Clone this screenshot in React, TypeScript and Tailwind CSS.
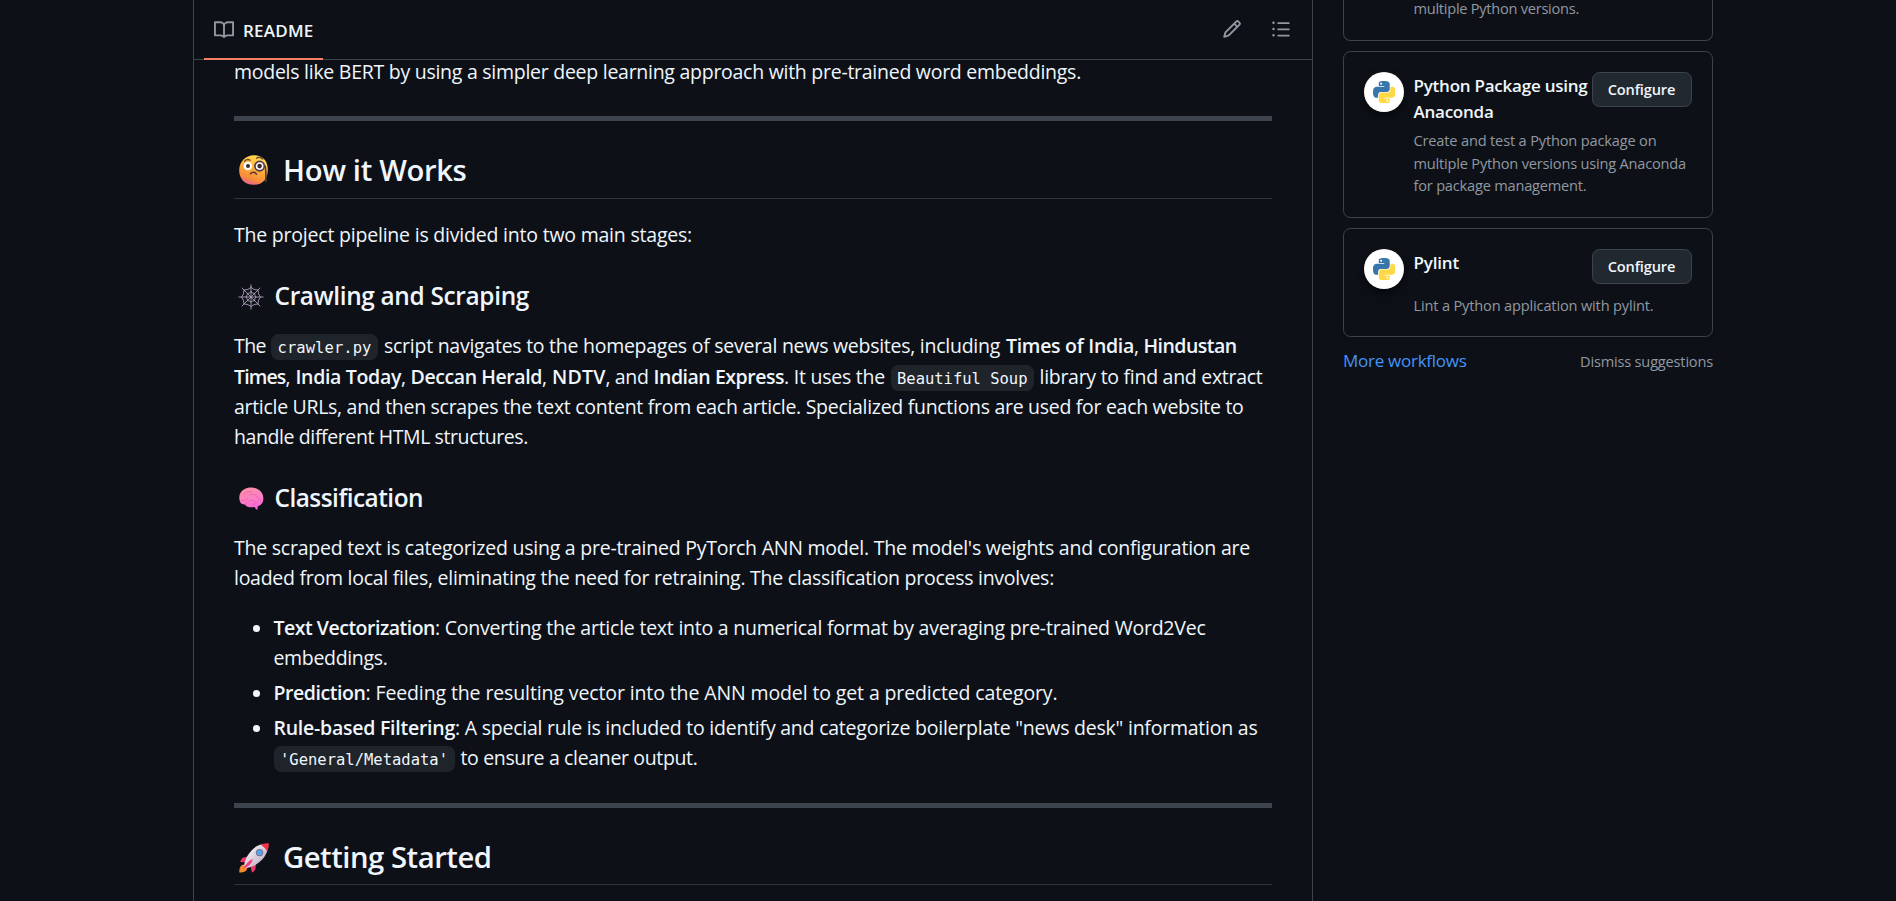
import { useLayoutEffect, useRef, useState } from "react";
import type { ReactNode } from "react";

/** A run of text whose letter spacing is adjusted so that it fills `w` pixels. */
function Fit({ w, children, className = "" }: { w: number; children: string; className?: string }) {
  const ref = useRef<HTMLSpanElement>(null);
  const [spacing, setSpacing] = useState(0);
  useLayoutEffect(() => {
    const el = ref.current;
    if (!el) return;
    el.style.letterSpacing = "0px";
    const value = (w - el.getBoundingClientRect().width) / children.length;
    el.style.letterSpacing = value + "px";
    setSpacing(value);
  }, [w, children]);
  return (
    <span ref={ref} className={"inline-block shrink-0 whitespace-pre " + className} style={{ letterSpacing: spacing }}>
      {children}
    </span>
  );
}

function Bold({ w, children, className = "" }: { w: number; children: string; className?: string }) {
  return (
    <strong className={"block shrink-0 font-semibold " + className}>
      <Fit w={w}>{children}</Fit>
    </strong>
  );
}

function Line({ children, className = "" }: { children: ReactNode; className?: string }) {
  return <div className={"flex h-[30px] leading-[30px] " + className}>{children}</div>;
}

function Code({ w, children, className = "" }: { w: number; children: string; className?: string }) {
  return (
    <code
      className={
        "mt-[3px] flex h-[26.5px] shrink-0 items-center rounded-[7.5px] bg-[#1f242b] px-[6.5px] pt-[1.5px] font-['DejaVu_Sans_Mono',monospace] text-[15.5px] leading-[26px] " +
        className
      }
    >
      <Fit w={w}>{children}</Fit>
    </code>
  );
}

function BookIcon() {
  return (
    <svg viewBox="0 0 16 16" className="mt-5 h-5 w-5 shrink-0 fill-[#9198a1]">
      <path d="M0 1.75A.75.75 0 0 1 .75 1h4.253c1.227 0 2.317.59 3 1.501A3.743 3.743 0 0 1 11.006 1h4.245a.75.75 0 0 1 .75.75v10.5a.75.75 0 0 1-.75.75h-4.507a2.25 2.25 0 0 0-1.591.659l-.622.621a.75.75 0 0 1-1.06 0l-.622-.621A2.25 2.25 0 0 0 5.258 13H.75a.75.75 0 0 1-.75-.75Zm7.251 10.324.004-5.073-.002-2.253A2.25 2.25 0 0 0 5.003 2.5H1.5v9h3.757a3.75 3.75 0 0 1 1.994.574ZM8.755 4.75l-.004 7.322a3.752 3.752 0 0 1 1.992-.572H14.5v-9h-3.495a2.25 2.25 0 0 0-2.25 2.25Z" />
    </svg>
  );
}

function PencilIcon() {
  return (
    <svg viewBox="0 0 16 16" className="h-5 w-5 fill-[#9198a1]">
      <path d="M11.013 1.427a1.75 1.75 0 0 1 2.474 0l1.086 1.086a1.75 1.75 0 0 1 0 2.474l-8.61 8.61c-.21.21-.47.364-.756.445l-3.251.93a.75.75 0 0 1-.927-.928l.929-3.25c.081-.286.235-.547.445-.758l8.61-8.61Zm.176 4.823L9.75 4.81l-6.286 6.287a.253.253 0 0 0-.064.108l-.558 1.953 1.953-.558a.253.253 0 0 0 .108-.064Zm1.238-3.763a.25.25 0 0 0-.354 0L10.811 3.75l1.439 1.44 1.263-1.263a.25.25 0 0 0 0-.354Z" />
    </svg>
  );
}

function ListIcon() {
  return (
    <svg viewBox="0 0 16 16" className="h-5 w-5 fill-[#9198a1]">
      <path d="M5.75 2.5h8.5a.75.75 0 0 1 0 1.5h-8.5a.75.75 0 0 1 0-1.5Zm0 5h8.5a.75.75 0 0 1 0 1.5h-8.5a.75.75 0 0 1 0-1.5Zm0 5h8.5a.75.75 0 0 1 0 1.5h-8.5a.75.75 0 0 1 0-1.5ZM2 14a1 1 0 1 1 0-2 1 1 0 0 1 0 2Zm1-6a1 1 0 1 1-2 0 1 1 0 0 1 2 0ZM2 4a1 1 0 1 1 0-2 1 1 0 0 1 0 2Z" />
    </svg>
  );
}

function PythonAvatar() {
  return (
    <div className="flex h-10 w-10 shrink-0 items-center justify-center rounded-full bg-white shadow-[0_4px_8px_rgba(1,4,9,0.7)]">
      <svg viewBox="0 0 24 24" className="h-[22.5px] w-[22.5px]">
        <path
          fill="#3776ab"
          d="M14.25.18l.9.2.73.26.59.3.45.32.34.34.25.34.16.33.1.3.04.26.02.2-.01.13V8.5l-.05.63-.13.55-.21.46-.26.38-.3.31-.33.25-.35.19-.35.14-.33.1-.3.07-.26.04-.21.02H8.77l-.69.05-.59.14-.5.22-.41.27-.33.32-.27.35-.2.36-.15.37-.1.35-.07.32-.04.27-.02.21v3.06H3.17l-.21-.03-.28-.07-.32-.12-.35-.18-.36-.26-.36-.36-.35-.46-.32-.59-.28-.73-.21-.88-.14-1.05-.05-1.23.06-1.22.16-1.04.24-.87.32-.71.36-.57.4-.44.42-.33.42-.24.4-.16.36-.1.32-.05.24-.01h.16l.06.01h8.16v-.83H6.18l-.01-2.75-.02-.37.05-.34.11-.31.17-.28.25-.26.31-.23.38-.2.44-.18.51-.15.58-.12.64-.1.71-.06.77-.04.84-.02 1.27.05zm-6.3 1.98l-.23.33-.08.41.08.41.23.34.33.22.41.09.41-.09.33-.22.23-.34.08-.41-.08-.41-.23-.33-.33-.22-.41-.09-.41.09z"
        />
        <path
          fill="#ffd845"
          d="M21.04 6.11l.28.06.32.12.35.18.36.27.36.35.35.47.32.59.28.73.21.88.14 1.04.05 1.23-.06 1.23-.16 1.04-.24.86-.32.71-.36.57-.4.45-.42.33-.42.24-.4.16-.36.09-.32.05-.24.02-.16-.01h-8.22v.82h5.84l.01 2.76.02.36-.05.34-.11.31-.17.29-.25.25-.31.24-.38.2-.44.17-.51.15-.58.13-.64.09-.71.07-.77.04-.84.01-1.27-.04-1.07-.14-.9-.2-.73-.25-.59-.3-.45-.33-.34-.34-.25-.34-.16-.33-.1-.3-.04-.25-.02-.2.01-.13v-5.34l.05-.64.13-.54.21-.46.26-.38.3-.32.33-.24.35-.2.35-.14.33-.1.3-.06.26-.04.21-.02.13-.01h5.84l.69-.05.59-.14.5-.21.41-.28.33-.32.27-.35.2-.36.15-.36.1-.35.07-.32.04-.28.02-.21V6.07h2.09l.14.01zm-6.47 14.25l-.23.33-.08.41.08.41.23.33.33.23.41.08.41-.08.33-.23.23-.33.08-.41-.08-.41-.23-.33-.33-.23-.41-.08-.41.08z"
        />
      </svg>
    </div>
  );
}

function MonocleFace() {
  return (
    <svg viewBox="0 0 30 30" className="ml-[5px] mt-[3.5px] h-[30px] w-[30px] shrink-0">
      <defs>
        <linearGradient id="face" x1="0.7" y1="0" x2="0.35" y2="1">
          <stop offset="0" stopColor="#ffe152" />
          <stop offset="0.45" stopColor="#fdb038" />
          <stop offset="0.8" stopColor="#f88b3c" />
          <stop offset="1" stopColor="#e2638f" />
        </linearGradient>
      </defs>
      <path d="M15 .2C23.500 .2 29 6 28.800 14.500 28.800 24 24 29.800 14.500 29.800 5.500 29.800 .2 23.500 .2 15.500 .2 6.500 6.500 .2 15 .2Z" fill="url(#face)" />
      <path d="M5.600 6.200c1.500-1.700 3.800-2 5.600-1M17.500 3.300c1.800-1.500 4.200-1.300 6.200.7" stroke="#714b30" strokeWidth="1.300" fill="none" strokeLinecap="round" />
      <circle cx="8.800" cy="11" r="4.300" fill="#fff" />
      <circle cx="9" cy="11.100" r="2" fill="#402a32" />
      <circle cx="20.600" cy="11.100" r="4.700" fill="#fff" stroke="#533b4d" strokeWidth="1.700" />
      <circle cx="20.600" cy="11.100" r="2.300" fill="#402a32" />
      <path d="M11.500 18.700c1.800-2 4.600-1.800 6 .4" stroke="#5c2f37" strokeWidth="1.500" fill="none" strokeLinecap="round" />
      <path d="M26 11c1.200 4 1 10 .8 15.500" stroke="#533b4d" strokeWidth="1.600" fill="none" strokeLinecap="round" />
    </svg>
  );
}

function WebIcon() {
  return (
    <svg viewBox="0 0 26 26" className="ml-[4px] mt-1 h-[26px] w-[26px] shrink-0" fill="none" stroke="#b4a5bf" strokeLinecap="round" strokeWidth="0.850">
      <path d="M13 .8v24.400M.8 13h24.400M4 4l18 18M22 4L4 22" />
      <path d="M13 3.500Q15.800 6.300 20 6Q19.800 10.200 22.500 13Q19.800 15.800 20 20Q15.800 19.800 13 22.500Q10.200 19.800 6 20Q6.200 15.800 3.500 13Q6.200 10.200 6 6Q10.200 6.300 13 3.500Z" />
      <path d="M13 8Q14.500 9.300 16.600 9.400Q16.700 11.500 18 13Q16.700 14.500 16.600 16.600Q14.500 16.700 13 18Q11.500 16.700 9.400 16.600Q9.300 14.500 8 13Q9.300 11.500 9.400 9.400Q11.500 9.300 13 8Z" />
    </svg>
  );
}

function BrainIcon() {
  return (
    <svg viewBox="0 0 25 23" className="ml-[5px] mt-[5.5px] h-[23px] w-[25px] shrink-0">
      <defs>
        <linearGradient id="brain" x1="0.3" y1="0" x2="0.6" y2="1">
          <stop offset="0" stopColor="#ff8fa6" />
          <stop offset="0.55" stopColor="#fb7fc4" />
          <stop offset="1" stopColor="#fb62da" />
        </linearGradient>
      </defs>
      <path
        d="M1 14.500C-.8 9.800.8 4.500 5.200 2.300 8.500.2 14.500-.3 18.500 2c4.300 2.300 6.300 6.500 5.800 10.500-.3 3.500-2.600 6.300-5.700 6.800.3 1.200.2 2.300-.3 3.400-.9.100-2-1.200-2.600-2.700-3.600.7-8 .6-9.700-2.600C3.400 17.500 1.500 16.500 1 14.500Z"
        fill="url(#brain)"
      />
      <path
        d="M5 7.500c2-3 5-3.500 7.500-2.500M10.500 8.500c2.500-2 6.500-1.500 7.500 1M2.500 13.500c3 .8 6-.5 6.500-2.500M6.500 17c2.500-3.500 6-4.500 9-3M18 10.500c2 .2 3.500 1.700 3.500 3.500M14.500 18c.2-1.800 1.500-3 3.500-3"
        stroke="#e04fae"
        strokeOpacity="0.6"
        strokeWidth="0.900"
        fill="none"
        strokeLinecap="round"
      />
    </svg>
  );
}

function RocketIcon() {
  return (
    <svg viewBox="0 0 30 30" className="ml-[5px] mt-[4.5px] h-[30px] w-[30px] shrink-0">
      <defs>
        <linearGradient id="hull" x1="0.2" y1="0.2" x2="0.8" y2="0.8">
          <stop offset="0" stopColor="#f4eef5" />
          <stop offset="1" stopColor="#bfb1c6" />
        </linearGradient>
      </defs>
      <path d="M4.500 21.500c-3 .5-4.300 3.500-4.200 8 4 .2 7.400-1 7.900-4Z" fill="#f58a2f" />
      <path d="M10.500 13.200 4.500 14.600C2.500 15.500 1.700 17 1.300 19l6.200.5ZM17.300 20l-1 6c-.7 1.800-1.600 3-3.300 3.500l-1.500-6Z" fill="#f0356b" />
      <path d="M5 22.700C6.500 13.500 13 3.800 22.600 1.300L28.400 7.300C26 16.500 17 23.300 7.500 25.200Z" fill="url(#hull)" />
      <path d="M21.500 1.700C24 .6 27 .1 29.800.2c.1 2.800-.4 5.800-1.600 8.200C26.800 5.300 24.500 3 21.500 1.700Z" fill="#f3314b" />
      <path d="M4 25.800C6.500 21.500 9.500 17.600 13.800 16c-.8 4.500-4.500 8-9.800 9.800Z" fill="#fa3e7c" />
      <circle cx="20.500" cy="9.600" r="3.700" fill="#7a7390" />
      <circle cx="20.500" cy="9.600" r="2.700" fill="#4fa5f5" />
    </svg>
  );
}

function Card({ className, children }: { className: string; children: ReactNode }) {
  return <div className={"flex gap-[10px] rounded-[7.5px] border border-[#3d444d] px-5 " + className}>{children}</div>;
}

function ConfigureButton() {
  return (
    <button className="flex h-[35px] w-[100px] shrink-0 items-center justify-center rounded-[7.5px] border border-[#3d444d] bg-[#212830] pb-px pr-px text-[14.6px] font-semibold">
      <Fit w={67.5}>Configure</Fit>
    </button>
  );
}

export default function App() {
  return (
    <div className="flex h-[901px] w-[1896px] overflow-hidden bg-[#0d1117] font-['Open_Sans',sans-serif] text-[19.5px] text-[#f0f6fc]">
      <main className="ml-[193px] flex h-full w-[1120px] shrink-0 flex-col border-x border-[#3d444d]">
        <header className="flex h-[60px] shrink-0 justify-between border-b border-[#3d444d] pl-[10px] pr-[21px]">
          <div className="relative flex w-[119px] pl-[10px]">
            <BookIcon />
            <span className="ml-[9px] mt-[17.5px] text-[17px] font-semibold leading-[26px]">
              <Fit w={70.5}>README</Fit>
            </span>
            <span className="absolute -bottom-px left-0 h-[2.5px] w-[119px] bg-[#f78166]" />
          </div>
          <div className="mt-[19px] flex gap-[29px]">
            <PencilIcon />
            <ListIcon />
          </div>
        </header>

        <article className="-mt-[3.5px] flex w-[1078px] flex-col pl-10">
          <Line>
            <Fit w={847}>models like BERT by using a simpler deep learning approach with pre-trained word embeddings.</Fit>
          </Line>
          <hr className="mt-[29.5px] h-[5px] shrink-0 border-0 bg-[#3d444d]" />

          <h2 className="mt-[30.5px] flex h-[47.5px] shrink-0 border-b border-[#2f353d] text-[29.25px] font-semibold leading-[37.5px]">
            <MonocleFace />
            <Fit w={183.5} className="ml-[14px]">How it Works</Fit>
          </h2>
          <Line className="mt-[20.5px]">
            <Fit w={458}>The project pipeline is divided into two main stages:</Fit>
          </Line>

          <h3 className="mt-[30px] flex h-[31.25px] shrink-0 text-[24.4px] font-semibold leading-[31.25px]">
            <WebIcon />
            <Fit w={254.5} className="ml-[10.5px]">Crawling and Scraping</Fit>
          </h3>
          <div className="mt-[19.75px] flex flex-col">
            <Line className="mb-px">
              <Fit w={32}>The</Fit>
              <Code w={94} className="ml-[5px]">crawler.py</Code>
              <Fit w={616} className="ml-[6px]">script navigates to the homepages of several news websites, including</Fit>
              <Bold w={128} className="ml-[6px]">Times of India</Bold>
              <Fit w={4.5}>,</Fit>
              <Bold w={93} className="ml-[5px]">Hindustan</Bold>
            </Line>
            <Line>
              <Bold w={51.5}>Times</Bold>
              <Fit w={5}>,</Fit>
              <Bold w={105.5} className="ml-[5px]">India Today</Bold>
              <Fit w={5}>,</Fit>
              <Bold w={131.5} className="ml-[4.5px]">Deccan Herald</Bold>
              <Fit w={5}>,</Fit>
              <Bold w={53.5} className="ml-[5px]">NDTV</Bold>
              <Fit w={43}>, and</Fit>
              <Bold w={130.5} className="ml-[5px]">Indian Express</Bold>
              <Fit w={101}>. It uses the</Fit>
              <Code w={130.5} className="ml-[5.5px]">Beautiful Soup</Code>
              <Fit w={223} className="ml-[5.5px]">library to find and extract</Fit>
            </Line>
            <Line>
              <Fit w={1009.5}>article URLs, and then scrapes the text content from each article. Specialized functions are used for each website to</Fit>
            </Line>
            <Line>
              <Fit w={294}>handle different HTML structures.</Fit>
            </Line>
          </div>

          <h3 className="mt-[30px] flex h-[31.25px] shrink-0 text-[24.4px] font-semibold leading-[31.25px]">
            <BrainIcon />
            <Fit w={148.5} className="ml-[10.5px]">Classification</Fit>
          </h3>
          <div className="mt-[19.75px] flex flex-col">
            <Line>
              <Fit w={1016}>The scraped text is categorized using a pre-trained PyTorch ANN model. The model's weights and configuration are</Fit>
            </Line>
            <Line>
              <Fit w={820}>loaded from local files, eliminating the need for retraining. The classification process involves:</Fit>
            </Line>
          </div>

          <ul className="mt-5 flex flex-col gap-[5px]">
            <li className="flex">
              <span className="ml-[19px] mr-[13.5px] mt-[12.5px] h-[7px] w-[7px] shrink-0 rounded-full bg-[#f0f6fc]" />
              <div>
                <Line>
                  <Bold w={161.5}>Text Vectorization</Bold>
                  <Fit w={770.5}>: Converting the article text into a numerical format by averaging pre-trained Word2Vec</Fit>
                </Line>
                <Line>
                  <Fit w={114}>embeddings.</Fit>
                </Line>
              </div>
            </li>
            <li className="flex">
              <span className="ml-[19px] mr-[13.5px] mt-[12.5px] h-[7px] w-[7px] shrink-0 rounded-full bg-[#f0f6fc]" />
              <Line>
                <Bold w={92}>Prediction</Bold>
                <Fit w={692}>: Feeding the resulting vector into the ANN model to get a predicted category.</Fit>
              </Line>
            </li>
            <li className="flex">
              <span className="ml-[19px] mr-[13.5px] mt-[12.5px] h-[7px] w-[7px] shrink-0 rounded-full bg-[#f0f6fc]" />
              <div>
                <Line>
                  <Bold w={181.5}>Rule-based Filtering</Bold>
                  <Fit w={802.5}>: A special rule is included to identify and categorize boilerplate "news desk" information as</Fit>
                </Line>
                <Line>
                  <Code w={168}>'General/Metadata'</Code>
                  <Fit w={237} className="ml-[6px]">to ensure a cleaner output.</Fit>
                </Line>
              </div>
            </li>
          </ul>
          <hr className="mt-[30.5px] h-[5px] shrink-0 border-0 bg-[#3d444d]" />

          <h2 className="mt-[30.5px] flex h-[46.5px] shrink-0 border-b border-[#2f353d] text-[29.25px] font-semibold leading-[37.5px]">
            <RocketIcon />
            <Fit w={208.5} className="ml-[14px]">Getting Started</Fit>
          </h2>
        </article>
      </main>

      <aside className="ml-[30px] flex w-[370px] shrink-0 flex-col text-[17px] leading-[26.25px]">
        <Card className="h-[41px] shrink-0 rounded-t-none border-t-0">
          <p className="ml-[49.5px] flex h-4 text-[14.6px] leading-[16px] text-[#9198a1]">
            <Fit w={165.5}>multiple Python versions.</Fit>
          </p>
        </Card>

        <Card className="mt-[10px] h-[167px] shrink-0 pt-5">
          <PythonAvatar />
          <div className="-ml-[0.5px] w-[278.5px]">
            <div className="flex justify-between">
              <h4 className="mt-[0.9px] font-semibold">
                <Fit w={174}>Python Package using</Fit>
                <br />
                <Fit w={80}>Anaconda</Fit>
              </h4>
              <ConfigureButton />
            </div>
            <div className="mt-[3.75px] flex flex-col text-[14.6px] leading-[22.5px] text-[#9198a1]">
              <div><Fit w={243}>Create and test a Python package on</Fit></div>
              <div><Fit w={272.5}>multiple Python versions using Anaconda</Fit></div>
              <div><Fit w={173}>for package management.</Fit></div>
            </div>
          </div>
        </Card>

        <Card className="mt-[10px] h-[109px] shrink-0 pt-5">
          <PythonAvatar />
          <div className="-ml-[0.5px] w-[278.5px]">
            <div className="flex justify-between">
              <h4 className="mt-[0.9px] font-semibold">
                <Fit w={45.5}>Pylint</Fit>
              </h4>
              <ConfigureButton />
            </div>
            <p className="mt-[10px] text-[14.6px] leading-[22.5px] text-[#9198a1]">
              <Fit w={240}>Lint a Python application with pylint.</Fit>
            </p>
          </div>
        </Card>

        <div className="mt-[10.7px] flex items-baseline justify-between">
          <a className="text-[#4493f8]">
            <Fit w={123.5}>More workflows</Fit>
          </a>
          <span className="text-[14.6px] text-[#9198a1]">
            <Fit w={133}>Dismiss suggestions</Fit>
          </span>
        </div>
      </aside>
    </div>
  );
}
